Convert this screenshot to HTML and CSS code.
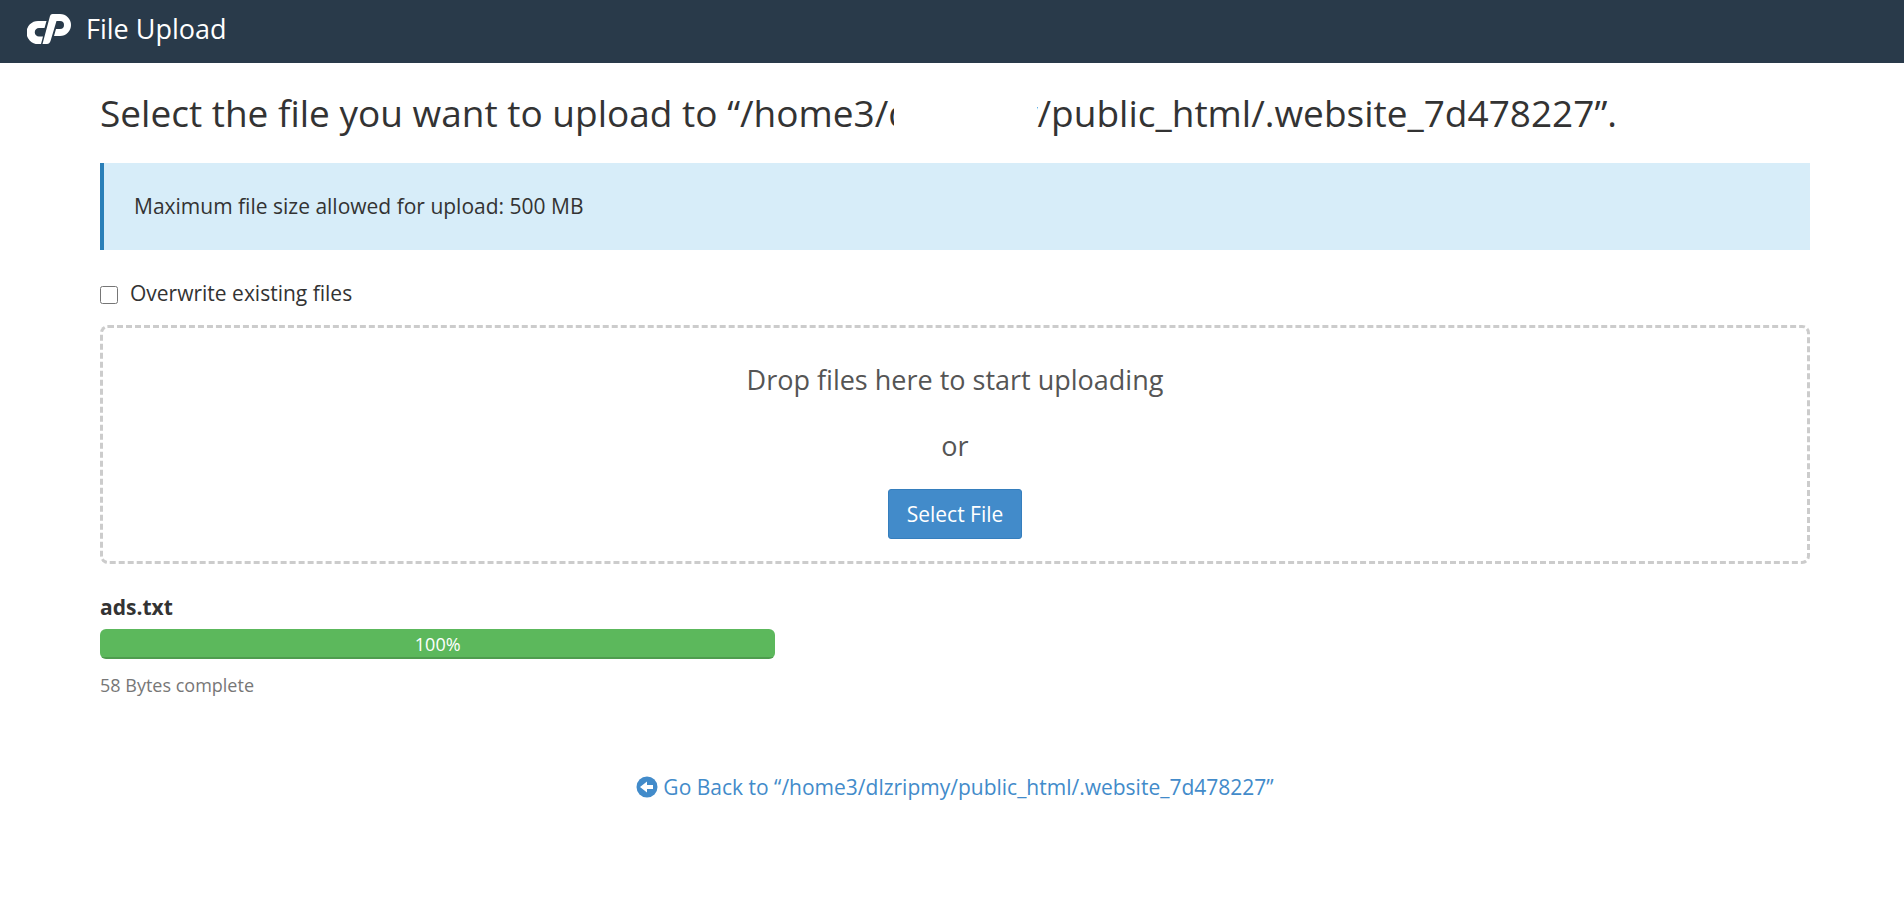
FILE: index.html
```html
<!DOCTYPE html>
<html lang="en">
<head>
    <meta charset="UTF-8">
    <meta name="viewport" content="width=device-width, initial-scale=1.0">
    <title>File Upload</title>
    <link rel="stylesheet" href="styles.css">
</head>
<body>
    <header class="navbar">
        <svg class="logo" viewBox="0 0 44 30" role="img" aria-label="cPanel">
            <path d="M11 7H19.500L17.500 14H12A4 4 0 0 0 12 22.500H16L14 30H11A11.500 11.500 0 0 1 11 7Z"/>
            <path d="M25.500 0H33A11 11 0 0 1 33 22H27L29 15H33A4 4 0 0 0 33 7H29.500L23.500 27Q22.500 30 20 30H15.500L23 2Q23.500 0 25.500 0Z"/>
        </svg>
        <span class="navbar-title">File Upload</span>
    </header>

    <main class="content">
        <h1 class="page-title">Select the file you want to upload to “/home3/<span class="account">dlzripmy</span>/public_html/.website_7d478227”.</h1>

        <div class="callout">Maximum file size allowed for upload: 500 MB</div>

        <div class="overwrite">
            <input type="checkbox" id="overwrite">
            <label for="overwrite">Overwrite existing files</label>
        </div>

        <div class="dropzone">
            <p>Drop files here to start uploading</p>
            <p>or</p>
            <button type="button" class="btn">Select File</button>
        </div>

        <div class="upload">
            <div class="upload-name">ads.txt</div>
            <div class="progress">
                <div class="progress-bar" style="width: 100%">100%</div>
            </div>
            <div class="upload-status">58 Bytes complete</div>
        </div>

        <div class="go-back">
            <a href="#">
                <svg class="icon" viewBox="0 0 22 22" aria-hidden="true">
                    <circle cx="11" cy="11" r="10.500"/>
                    <path d="M4 11L11 5.500V9H17V13H11V16.500Z"/>
                </svg>
                Go Back to “/home3/dlzripmy/public_html/.website_7d478227”
            </a>
        </div>
    </main>
</body>
</html>
```

FILE: styles.css
```css
* {
    box-sizing: border-box;
}

body {
    margin: 0;
    background: #fff;
    color: #333;
    font-family: "Open Sans", sans-serif;
    font-size: 21px;
    line-height: 30px;
}

.navbar {
    display: flex;
    align-items: center;
    gap: 15px;
    height: 63px;
    padding: 0 27px 5px;
    background: #293a4a;
    color: #fff;
}

.logo {
    width: 44px;
    height: 30px;
    fill: #fff;
}

.navbar-title {
    font-size: 27px;
}

.content {
    padding: 26px 94px 40px 100px;
}

.page-title {
    margin: 0 0 26px;
    font-size: 37px;
    font-weight: 400;
    line-height: 48px;
}

.account {
    position: relative;
}

/* keeps the account name out of sight */
.account::after {
    content: "";
    position: absolute;
    top: 0;
    bottom: 0;
    left: 6px;
    right: 1px;
    background: #fff;
}

.callout {
    padding: 28px 30px 29px;
    border-left: 4px solid #2a7fb8;
    background: #d7edf9;
}

.overwrite {
    display: flex;
    align-items: center;
    gap: 12px;
    margin: 28px 0 17px;
}

.overwrite input {
    width: 18px;
    height: 18px;
    margin: 4px 0 0;
}

.dropzone {
    padding: 29px 20px 22px;
    border: 3px dashed #ccc;
    border-radius: 8px;
    color: #555;
    font-size: 27px;
    text-align: center;
}

.dropzone p {
    margin: 0 0 20px;
    line-height: 46px;
}

.btn {
    display: block;
    height: 50px;
    margin: 0 auto;
    padding: 0 18px;
    border: 1px solid #357ebd;
    border-radius: 3px;
    background: #428bca;
    color: #fff;
    font-family: inherit;
    font-size: 21px;
    cursor: pointer;
}

.upload {
    width: 39.5%;
    margin-top: 28px;
}

.upload-name {
    font-weight: 700;
}

.progress {
    height: 30px;
    margin: 7px 0 11px;
    border-radius: 6px;
    background: #f5f5f5;
    overflow: hidden;
}

.progress-bar {
    height: 100%;
    background: #5cb85c;
    box-shadow: inset 0 -2px 0 rgba(0, 0, 0, 0.15);
    color: #fff;
    font-size: 18px;
    text-align: center;
}

.upload-status {
    color: #777;
    font-size: 18px;
}

.go-back {
    margin-top: 72px;
    text-align: center;
}

.go-back a {
    display: inline-flex;
    align-items: center;
    gap: 5px;
    color: #428bca;
    text-decoration: none;
}

.icon {
    width: 22px;
    height: 22px;
    fill: #428bca;
}

.icon path {
    fill: #fff;
}
```
